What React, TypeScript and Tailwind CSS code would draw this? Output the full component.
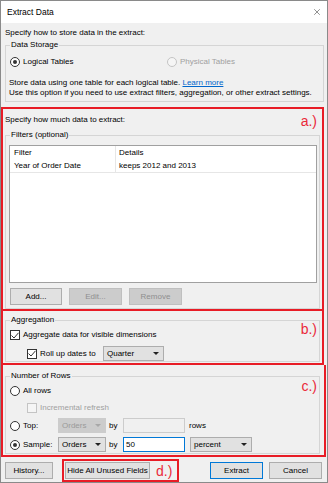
import { X } from 'lucide-react';

const Radio = ({ checked, disabled }: { checked?: boolean; disabled?: boolean }) => (
    <span
        className={`w-[10px] h-[10px] shrink-0 rounded-full border flex items-center justify-center ${
            disabled ? 'border-[#c4c4c4] bg-[#f5f5f5]' : 'border-[#333333] bg-white'
        }`}
    >
        {checked && <span className="w-[4px] h-[4px] rounded-full bg-[#333333]" />}
    </span>
);

const Check = ({ checked, disabled }: { checked?: boolean; disabled?: boolean }) => (
    <span
        className={`w-[10px] h-[10px] shrink-0 border flex items-center justify-center ${
            disabled ? 'border-[#c4c4c4] bg-[#f5f5f5]' : 'border-[#333333] bg-white'
        }`}
    >
        {checked && (
            <svg width="8" height="7" viewBox="0 0 8 7">
                <path d="M0.5 3.5 L3 6 L7.5 0.8" stroke="#333333" strokeWidth="1" fill="none" />
            </svg>
        )}
    </span>
);

const Arrow = ({ disabled }: { disabled?: boolean }) => (
    <svg width="6" height="3" viewBox="0 0 6 3" className="shrink-0">
        <polygon points="0,0 6,0 3,3" fill={disabled ? '#a8a8a8' : '#222222'} />
    </svg>
);

const Select = ({ value, width, disabled }: { value: string; width: string; disabled?: boolean }) => (
    <div
        className={`h-[15px] ${width} shrink-0 border flex items-center justify-between pl-[3px] pr-[4px] ${
            disabled ? 'border-[#cccccc] bg-[#cccccc] text-[#9a9a9a]' : 'border-[#adadad] bg-[#e1e1e1]'
        }`}
    >
        <span>{value}</span>
        <Arrow disabled={disabled} />
    </div>
);

const Btn = ({ label, width, disabled, primary }: { label: string; width: string; disabled?: boolean; primary?: boolean }) => (
    <div
        className={`h-[17px] ${width} shrink-0 border flex items-center justify-center ${
            disabled
                ? 'border-[#bfbfbf] bg-[#cccccc] text-[#8f8f8f]'
                : primary
                ? 'border-[#0078d7] bg-[#e1e1e1]'
                : 'border-[#adadad] bg-[#e1e1e1]'
        }`}
    >
        {label}
    </div>
);

const Legend = ({ text }: { text: string }) => (
    <span className="self-start -mt-[6px] ml-[4px] px-[1px] h-[10px] leading-[10px] bg-[#f0f0f0]">{text}</span>
);

const Note = ({ text, pos }: { text: string; pos: string }) => (
    <span className={`absolute ${pos} text-[14px] leading-[16px] text-[#ea2a3a]`}>{text}</span>
);

const App = () => {
    return (
        <div className="w-[328px] h-[483px] border border-[#8a8a8a] bg-[#f0f0f0] flex flex-col overflow-hidden font-['Liberation_Sans',Arial,sans-serif] text-[8px] leading-[10px] text-black">
            {/* title bar */}
            <div className="h-[22px] shrink-0 bg-white flex items-center justify-between pl-[6px] pr-[5px]">
                <span className="text-[8.5px]">Extract Data</span>
                <X size={10} strokeWidth={1.2} className="text-[#222222]" />
            </div>

            <div className="mt-[5px] h-[10px] pl-[4px]">Specify how to store data in the extract:</div>

            {/* data storage */}
            <div className="mt-[7px] ml-[4px] w-[319px] h-[57px] shrink-0 border border-[#d5d5d5] flex flex-col">
                <Legend text="Data Storage" />
                <div className="mt-[7px] h-[10px] pl-[4px] flex items-center">
                    <div className="w-[157px] flex items-center gap-[3px]">
                        <Radio checked />
                        <span>Logical Tables</span>
                    </div>
                    <div className="flex items-center gap-[3px] text-[#a0a0a0]">
                        <Radio disabled />
                        <span>Physical Tables</span>
                    </div>
                </div>
                <div className="mt-[11px] h-[10px] pl-[3px] whitespace-nowrap">
                    Store data using one table for each logical table.{' '}
                    <span className="text-[#0066cc] underline">Learn more</span>
                </div>
                <div className="h-[10px] pl-[3px] whitespace-nowrap">
                    Use this option if you need to use extract filters, aggregation, or other extract settings.
                </div>
            </div>

            {/* a.) */}
            <div className="relative mt-[5px] w-[323px] h-[204px] shrink-0 border-2 border-[#e81c26] flex flex-col">
                <Note text="a.)" pos="right-[5px] top-[4px]" />
                <div className="mt-[6px] h-[10px] pl-[2px]">Specify how much data to extract:</div>
                <div className="mt-[10px] ml-[2px] w-[315px] h-[174px] border border-[#d5d5d5] flex flex-col">
                    <Legend text="Filters (optional)" />
                    <div className="mt-[5px] ml-[3px] w-[308px] h-[138px] border border-[#a0a0a0] bg-white">
                        <div className="flex h-[27px] border-b border-[#e6e6e6]">
                            <div className="w-[106px] border-r border-[#e6e6e6] flex flex-col pl-[4px]">
                                <div className="h-[14px] flex items-center">Filter</div>
                                <div className="h-[12px] flex items-center">Year of Order Date</div>
                            </div>
                            <div className="flex flex-col pl-[3px]">
                                <div className="h-[14px] flex items-center">Details</div>
                                <div className="h-[12px] flex items-center">keeps 2012 and 2013</div>
                            </div>
                        </div>
                    </div>
                    <div className="mt-[5px] pl-[4px] flex gap-[7px]">
                        <Btn label="Add..." width="w-[52px]" />
                        <Btn label="Edit..." width="w-[53px]" disabled />
                        <Btn label="Remove" width="w-[53px]" disabled />
                    </div>
                </div>
            </div>

            {/* b.) */}
            <div className="relative w-[323px] h-[54px] shrink-0 border-x-2 border-b-2 border-[#e81c26] flex flex-col">
                <Note text="b.)" pos="right-[5px] top-[10px]" />
                <div className="mt-[9px] ml-[2px] w-[315px] h-[42px] border border-[#d5d5d5] flex flex-col">
                    <Legend text="Aggregation" />
                    <div className="mt-[5px] h-[10px] pl-[4px] flex items-center gap-[3px]">
                        <Check checked />
                        <span>Aggregate data for visible dimensions</span>
                    </div>
                    <div className="mt-[6px] h-[15px] pl-[21px] flex items-center">
                        <Check checked />
                        <span className="ml-[3px] w-[63px]">Roll up dates to</span>
                        <Select value="Quarter" width="w-[61px]" />
                    </div>
                </div>
            </div>

            {/* c.) */}
            <div className="relative w-[325px] h-[92px] shrink-0 border-x-2 border-b-2 border-[#e81c26] flex flex-col">
                <Note text="c.)" pos="right-[7px] top-[13px]" />
                <div className="mt-[11px] ml-[2px] w-[315px] h-[78px] border border-[#d5d5d5] flex flex-col">
                    <Legend text="Number of Rows" />
                    <div className="mt-[5px] h-[10px] pl-[4px] flex items-center gap-[3px]">
                        <Radio />
                        <span>All rows</span>
                    </div>
                    <div className="mt-[7px] h-[10px] pl-[21px] flex items-center gap-[3px] text-[#a0a0a0]">
                        <Check disabled />
                        <span>Incremental refresh</span>
                    </div>
                    <div className="mt-[5px] h-[15px] pl-[4px] flex items-center">
                        <Radio />
                        <span className="ml-[3px] w-[35px]">Top:</span>
                        <Select value="Orders" width="w-[48px]" disabled />
                        <span className="ml-[3px] w-[14px]">by</span>
                        <div className="w-[62px] h-[15px] border border-[#cccccc] bg-[#f0f0f0]" />
                        <span className="ml-[4px]">rows</span>
                    </div>
                    <div className="mt-[4px] h-[15px] pl-[4px] flex items-center">
                        <Radio checked />
                        <span className="ml-[3px] w-[35px]">Sample:</span>
                        <Select value="Orders" width="w-[48px]" />
                        <span className="ml-[3px] w-[14px]">by</span>
                        <div className="w-[62px] h-[15px] border border-[#0078d7] bg-white flex items-center pl-[2px]">50</div>
                        <div className="ml-[5px]">
                            <Select value="percent" width="w-[62px]" />
                        </div>
                    </div>
                </div>
            </div>

            {/* footer buttons */}
            <div className="mt-[5px] h-[17px] shrink-0 flex items-center">
                <div className="ml-[4px]">
                    <Btn label="History..." width="w-[48px]" />
                </div>
                <div className="ml-[9px] w-[117px] h-[23px] border-2 border-[#e81c26] flex items-center">
                    <div className="ml-[1px]">
                        <Btn label="Hide All Unused Fields" width="w-[85px]" />
                    </div>
                    <span className="ml-[6px] text-[14px] leading-[16px] text-[#ea2a3a]">d.)</span>
                </div>
                <div className="ml-auto mr-[5px] flex gap-[6px]">
                    <Btn label="Extract" width="w-[53px]" primary />
                    <Btn label="Cancel" width="w-[53px]" />
                </div>
            </div>
        </div>
    );
};

export default App;
